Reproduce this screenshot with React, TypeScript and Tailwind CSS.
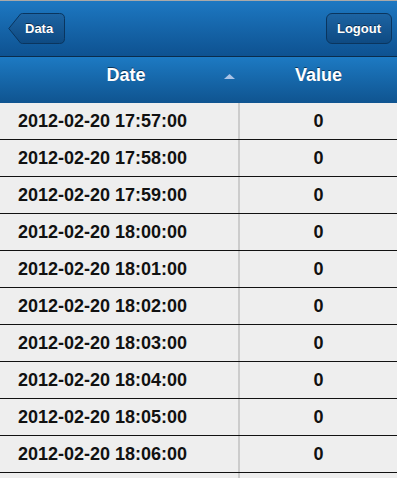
const rows = [
  '2012-02-20 17:57:00',
  '2012-02-20 17:58:00',
  '2012-02-20 17:59:00',
  '2012-02-20 18:00:00',
  '2012-02-20 18:01:00',
  '2012-02-20 18:02:00',
  '2012-02-20 18:03:00',
  '2012-02-20 18:04:00',
  '2012-02-20 18:05:00',
  '2012-02-20 18:06:00',
];

function BackButton({ label }: { label: string }) {
  return (
    <button className="relative flex h-[31px] items-center pl-[17px] pr-[10px] text-[13px] font-bold text-white [text-shadow:0_-1px_0_rgba(0,0,0,0.5)]">
      {/* arrow + body drawn as one shape */}
      <svg className="absolute inset-0" width="57" height="31" viewBox="0 0 57 31">
        <defs>
          <linearGradient id="bb" x1="0" y1="0" x2="0" y2="1">
            <stop offset="0" stopColor="#1d64a3" />
            <stop offset="1" stopColor="#0e4a82" />
          </linearGradient>
        </defs>
        <path
          d="M0.8 15.5 L12.5 1 Q13.3 0.5 14.5 0.5 L51.5 0.5 Q56.5 0.5 56.5 5.5 L56.5 25.5 Q56.5 30.5 51.5 30.5 L14.5 30.5 Q13.3 30.5 12.5 30 Z"
          fill="url(#bb)"
          stroke="#0a355e"
          strokeWidth="1"
        />
      </svg>
      <span className="relative">{label}</span>
    </button>
  );
}

export default function App() {
  return (
    <div className="h-[478px] w-[397px] overflow-hidden bg-[#eeeeee] font-['Liberation_Sans',Arial,sans-serif]">
      {/* Toolbar */}
      <div className="flex h-[57px] items-center justify-between border-t border-b border-t-[#a9a9a9] border-b-[#0a2c4c] bg-gradient-to-b from-[#1d78c2] to-[#0e5291] pl-[8px] pr-[5px]">
        <BackButton label="Data" />
        <button className="flex h-[31px] items-center rounded-[6px] border border-[#0a355e] bg-gradient-to-b from-[#1d64a3] to-[#0e4a82] px-[10px] text-[13px] font-bold text-white [text-shadow:0_-1px_0_rgba(0,0,0,0.5)]">
          Logout
        </button>
      </div>

      {/* Header */}
      <div className="flex h-[46px] items-center bg-gradient-to-b from-[#1d7ac3] to-[#0f5490] pb-[10px] text-[18px] font-bold text-white [text-shadow:0_-1px_0_rgba(0,0,0,0.5)]">
        <div className="relative flex w-[240px] items-center justify-center pl-[12px]">
          Date
          <svg className="absolute left-[224px] top-[12px]" width="11" height="6" viewBox="0 0 11 6">
            <path d="M5.5 0 L11 5 L0 5 Z" fill="#a9c3e6" />
          </svg>
        </div>
        <div className="flex flex-1 items-center justify-center">Value</div>
      </div>

      {/* Rows */}
      <div className="flex flex-col">
        {rows.map((r) => (
          <div key={r} className="flex h-[37px] border-b border-[#111111] text-[18px] font-bold text-[#111111]">
            <div className="flex w-[240px] items-center border-r-2 border-[#cccccc] pl-[18px]">{r}</div>
            <div className="flex flex-1 items-center justify-center">0</div>
          </div>
        ))}
        {/* next row, scrolled below the fold */}
        <div className="flex h-[37px]">
          <div className="w-[240px] border-r-2 border-[#cccccc]" />
          <div className="flex-1" />
        </div>
      </div>
    </div>
  );
}
